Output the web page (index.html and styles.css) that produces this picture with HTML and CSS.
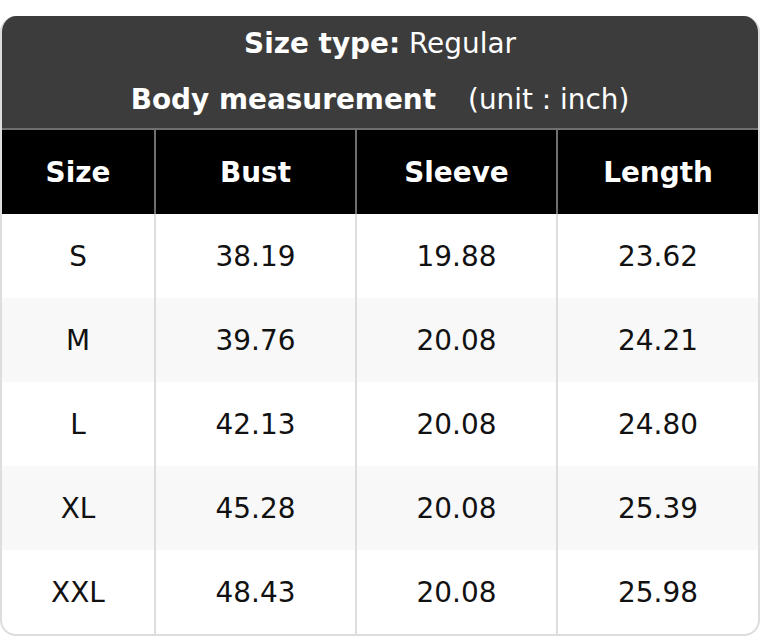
FILE: index.html
```html
<!DOCTYPE html>
<html>
<head>
<meta charset="utf-8">
<link rel="stylesheet" href="styles.css">
</head>
<body>
<div class="chart">
  <div class="head">
    <div class="line"><b>Size type:</b> Regular</div>
    <div class="line"><b>Body measurement</b><span class="unit">(unit : inch)</span></div>
  </div>
  <table class="sizes">
    <colgroup><col class="c1"><col><col><col></colgroup>
    <thead>
      <tr><th>Size</th><th>Bust</th><th>Sleeve</th><th>Length</th></tr>
    </thead>
    <tbody>
      <tr><td>S</td><td>38.19</td><td>19.88</td><td>23.62</td></tr>
      <tr><td>M</td><td>39.76</td><td>20.08</td><td>24.21</td></tr>
      <tr><td>L</td><td>42.13</td><td>20.08</td><td>24.80</td></tr>
      <tr><td>XL</td><td>45.28</td><td>20.08</td><td>25.39</td></tr>
      <tr><td>XXL</td><td>48.43</td><td>20.08</td><td>25.98</td></tr>
    </tbody>
  </table>
</div>
</body>
</html>
```
FILE: styles.css
```css
html, body {
  margin: 0;
  padding: 0;
  background: #fff;
}
body {
  padding-top: 16px;
  font-family: "DejaVu Sans", sans-serif;
  font-size: 27.9px;
}
.chart {
  width: 760px;
  box-sizing: border-box;
  border: 2px solid #dddddd;
  border-top: none;
  border-radius: 16px;
  overflow: hidden;
}
.head {
  background: #3c3c3c;
  color: #fff;
  text-align: center;
  border-bottom: 2px solid #6f6f6f;
  margin: 0 -2px;
}
.line {
  height: 56px;
  line-height: 56px;
}
.line b {
  font-weight: bold;
}
.unit {
  margin-left: 32px;
}
.sizes {
  width: 100%;
  border-collapse: collapse;
  table-layout: fixed;
}
.c1 {
  width: 153px;
}
.sizes th, .sizes td {
  height: 84px;
  padding: 0;
  text-align: center;
  vertical-align: middle;
}
.sizes th {
  background: #000;
  color: #fff;
  font-weight: bold;
  border-left: 2px solid #6f6f6f;
}
.sizes td {
  color: #111;
  border-left: 2px solid #dddddd;
}
.sizes th:first-child, .sizes td:first-child {
  border-left: none;
}
.sizes tbody tr:nth-child(even) td {
  background: #f8f8f8;
}
```
